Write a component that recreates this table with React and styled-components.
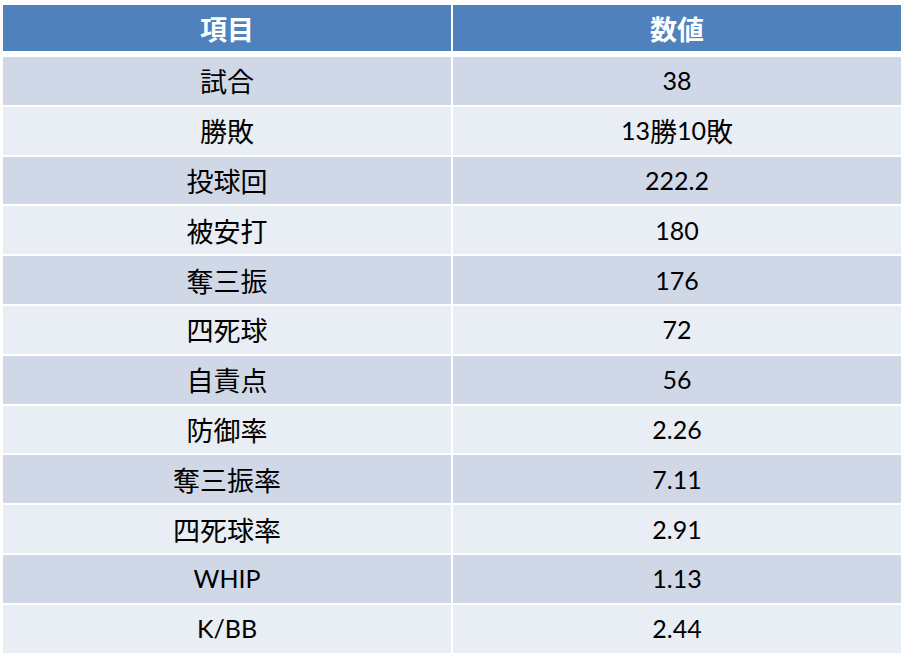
import styled, { createGlobalStyle } from "styled-components";

const GlobalStyle = createGlobalStyle`
  body {
    margin: 0;
    background: #ffffff;
    font-family: "Lato", "Noto Sans CJK JP", sans-serif;
  }
`;

const Page = styled.div`
  padding: 5px 0 0 3px;
`;

const StatsTable = styled.div`
  width: 898px;
  display: flex;
  flex-direction: column;
  gap: 6px;
`;

const Row = styled.div`
  display: grid;
  grid-template-columns: 448px 448px;
  column-gap: 2px;
  height: ${(p) => (p.$head ? "46px" : "47.8px")};
`;

const Body = styled.div`
  display: flex;
  flex-direction: column;
  gap: 2px;
`;

const Cell = styled.div`
  display: flex;
  align-items: center;
  justify-content: center;
  font-size: 25px;
  line-height: 1;
  color: ${(p) => (p.$head ? "#ffffff" : "#000000")};
  font-weight: ${(p) => (p.$head ? 700 : 400)};
  background: ${(p) =>
    p.$head ? "#4f81bd" : p.$odd ? "#d0d8e8" : "#e9edf4"};
`;

// Japanese glyphs sit a little larger than the Latin digits
const Kanji = styled.span`
  font-family: "Noto Sans CJK JP", sans-serif;
  font-size: 27px;
`;

const stats = [
  ["試合", "38"],
  ["勝敗", "13勝10敗"],
  ["投球回", "222.2"],
  ["被安打", "180"],
  ["奪三振", "176"],
  ["四死球", "72"],
  ["自責点", "56"],
  ["防御率", "2.26"],
  ["奪三振率", "7.11"],
  ["四死球率", "2.91"],
  ["WHIP", "1.13"],
  ["K/BB", "2.44"],
];

function MixedText({ text }) {
  const parts = text.split(/([\u3040-\u30ff\u4e00-\u9fff]+)/).filter(Boolean);
  return parts.map((part, i) =>
    /[\u3040-\u30ff\u4e00-\u9fff]/.test(part) ? (
      <Kanji key={i}>{part}</Kanji>
    ) : (
      <span key={i}>{part}</span>
    )
  );
}

export default function App() {
  return (
    <>
      <GlobalStyle />
      <Page>
        <StatsTable>
          <Row $head>
            <Cell $head>
              <MixedText text="項目" />
            </Cell>
            <Cell $head>
              <MixedText text="数値" />
            </Cell>
          </Row>
          <Body>
            {stats.map(([label, value], i) => (
              <Row key={label}>
                <Cell $odd={i % 2 === 0}>
                  <MixedText text={label} />
                </Cell>
                <Cell $odd={i % 2 === 0}>
                  <MixedText text={value} />
                </Cell>
              </Row>
            ))}
          </Body>
        </StatsTable>
      </Page>
    </>
  );
}
